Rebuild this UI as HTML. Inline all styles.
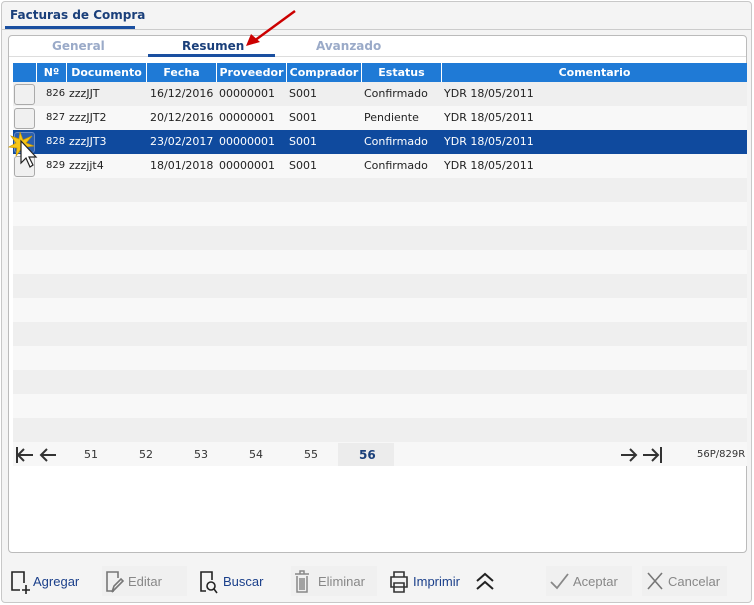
<!DOCTYPE html>
<html><head><style>
*{box-sizing:border-box;margin:0;padding:0}
body{width:754px;height:605px;background:#fff;font-family:Tahoma,"DejaVu Sans","Liberation Sans",sans-serif;position:relative;overflow:hidden}
.abs{position:absolute}
.outer{left:1px;top:1px;width:751px;height:602px;border:1px solid #c8c8c8;border-radius:4px;background:#f4f4f4}
.panel{left:8px;top:35px;width:739px;height:518px;border:1px solid #bbb;border-radius:4px;background:#fff}
.tab{top:39px;font-size:12px;font-weight:bold;color:#9aaac8}
.hdr{top:63px;height:19px;background:#1f7ad6;color:#fff;font-size:11px;font-weight:bold;text-align:center;line-height:19px;border-right:1px solid #fff}
.row{left:13px;width:734px;height:24px}
.cell{font-size:11px;line-height:24px;top:0;color:#222}
.cb{left:1px;top:2px;width:21px;height:21px;border:1px solid #aaa;border-radius:3px;background:#f0f0f0}
.pg{top:448px;font-size:11px;color:#333}
.btn{top:567px;height:29px;font-size:13px;line-height:29px;font-family:"Liberation Sans",sans-serif}
</style></head><body>
<div class="abs outer"></div>
<div class="abs" style="left:10px;top:8px;font-size:12px;font-weight:bold;color:#1a3f7a">Facturas de Compra</div>
<div class="abs" style="left:5px;top:26px;width:130px;height:3px;background:#1a4fa0"></div>
<div class="abs" style="left:2px;top:29px;width:749px;height:1px;background:#ccc"></div>
<div class="abs panel"></div>
<div class="abs" style="left:9px;top:56px;width:737px;height:1px;background:#ddd"></div>
<div class="abs tab" style="left:52px">General</div>
<div class="abs tab" style="left:182px;color:#1a3f7a">Resumen</div>
<div class="abs tab" style="left:316px">Avanzado</div>
<div class="abs" style="left:148px;top:54px;width:127px;height:3px;background:#1a4fa0"></div>
<svg class="abs" style="left:240px;top:8px" width="60" height="40"><line x1="55" y1="3" x2="14" y2="33" stroke="#c00" stroke-width="2.5"/><polygon points="6,38 11,26 20,34" fill="#c00"/></svg>
<div class="abs hdr" style="left:13px;width:24px"></div>
<div class="abs hdr" style="left:37px;width:30px">Nº</div>
<div class="abs hdr" style="left:67px;width:80px">Documento</div>
<div class="abs hdr" style="left:147px;width:70px">Fecha</div>
<div class="abs hdr" style="left:217px;width:70px">Proveedor</div>
<div class="abs hdr" style="left:287px;width:75px">Comprador</div>
<div class="abs hdr" style="left:362px;width:80px">Estatus</div>
<div class="abs hdr" style="left:442px;width:305px;border:none">Comentario</div>

<div class="abs row" style="top:82px;background:#efefef"><div class="abs cb"></div><div class="abs cell" style="left:33px;font-size:10px">826</div><div class="abs cell" style="left:56px">zzzJJT</div><div class="abs cell" style="left:137px">16/12/2016</div><div class="abs cell" style="left:206px">00000001</div><div class="abs cell" style="left:276px">S001</div><div class="abs cell" style="left:351px">Confirmado</div><div class="abs cell" style="left:431px">YDR 18/05/2011</div></div>
<div class="abs row" style="top:106px;background:#f8f8f8"><div class="abs cb"></div><div class="abs cell" style="left:33px;font-size:10px">827</div><div class="abs cell" style="left:56px">zzzJJT2</div><div class="abs cell" style="left:137px">20/12/2016</div><div class="abs cell" style="left:206px">00000001</div><div class="abs cell" style="left:276px">S001</div><div class="abs cell" style="left:351px">Pendiente</div><div class="abs cell" style="left:431px">YDR 18/05/2011</div></div>
<div class="abs row" style="top:130px;background:#0f4a9e"><div class="abs cb" style="background:#2b5fae;border-color:#6a8cc4"></div><div class="abs cell" style="left:33px;font-size:10px;color:#fff">828</div><div class="abs cell" style="left:56px;color:#fff">zzzJJT3</div><div class="abs cell" style="left:137px;color:#fff">23/02/2017</div><div class="abs cell" style="left:206px;color:#fff">00000001</div><div class="abs cell" style="left:276px;color:#fff">S001</div><div class="abs cell" style="left:351px;color:#fff">Confirmado</div><div class="abs cell" style="left:431px;color:#fff">YDR 18/05/2011</div></div>
<div class="abs row" style="top:154px;background:#f8f8f8"><div class="abs cb"></div><div class="abs cell" style="left:33px;font-size:10px">829</div><div class="abs cell" style="left:56px">zzzjjt4</div><div class="abs cell" style="left:137px">18/01/2018</div><div class="abs cell" style="left:206px">00000001</div><div class="abs cell" style="left:276px">S001</div><div class="abs cell" style="left:351px">Confirmado</div><div class="abs cell" style="left:431px">YDR 18/05/2011</div></div>
<div class="abs row" style="top:178px;height:264px;background:repeating-linear-gradient(#efefef 0 24px,#f8f8f8 24px 48px)"></div>
<svg class="abs" style="left:8px;top:130px" width="34" height="48"><polygon points="12,2 15,10 24,6 18,13 26,16 17,17 20,25 13,19 8,26 9,18 1,17 8,13 3,6 11,9" fill="#f5c518" stroke="#c90" stroke-width=".7"/><path d="M13,11 L13,33 L18,28 L22,37 L25,35 L21,27 L28,27 Z" fill="#fff" stroke="#222" stroke-width="1.2"/></svg>

<div class="abs" style="left:13px;top:442px;width:734px;height:24px;background:#f7f7f7"></div>
<div class="abs" style="left:338px;top:443px;width:56px;height:23px;background:#ececec"></div>
<svg class="abs" style="left:14px;top:446px" width="50" height="18" stroke="#333" stroke-width="2" fill="none"><path d="M3,1V17M4,9H19M10,3L4,9L10,15"/><path d="M27,9H42M33,3L27,9L33,15"/></svg>
<div class="abs pg" style="left:84px">51</div><div class="abs pg" style="left:139px">52</div><div class="abs pg" style="left:194px">53</div><div class="abs pg" style="left:249px">54</div><div class="abs pg" style="left:304px">55</div><div class="abs pg" style="left:359px;color:#1a3f7a;font-weight:bold;font-size:12px">56</div>
<svg class="abs" style="left:619px;top:446px" width="46" height="18" stroke="#333" stroke-width="2" fill="none"><path d="M2,9H17M11,3L17,9L11,15"/><path d="M24,9H39M33,3L39,9L33,15M42,1V17"/></svg>
<div class="abs pg" style="left:697px;font-size:10px;top:449px">56P/829R</div>

<svg class="abs" style="left:9px;top:570px" width="22" height="26" stroke="#222" stroke-width="1.6" fill="none"><path d="M11,20H3V2H15V13"/><path d="M17,15V24M13,20H21"/></svg>
<div class="abs btn" style="left:33px;color:#1a3f8a">Agregar</div>
<div class="abs" style="left:102px;top:566px;width:85px;height:30px;background:#f0f0f0"></div>
<svg class="abs" style="left:104px;top:570px" width="22" height="26" stroke="#777" stroke-width="1.6" fill="none"><path d="M10,21H3V2H14V8"/><path d="M8,22L10,16L17,9L19,11L12,18Z"/></svg>
<div class="abs btn" style="left:128px;color:#888">Editar</div>
<svg class="abs" style="left:198px;top:570px" width="22" height="26" stroke="#222" stroke-width="1.6" fill="none"><path d="M8,21H3V2H14V10"/><circle cx="13" cy="16" r="4"/><path d="M16,19L19,23"/></svg>
<div class="abs btn" style="left:223px;color:#1a3f8a">Buscar</div>
<div class="abs" style="left:291px;top:566px;width:86px;height:30px;background:#f0f0f0"></div>
<svg class="abs" style="left:292px;top:568px" width="22" height="28" stroke="#888" stroke-width="1.5" fill="none"><path d="M3,6H17M8,6V3H12V6M5,8V24H15V8M8,10V22M10,10V22M12,10V22"/></svg>
<div class="abs btn" style="left:318px;color:#888">Eliminar</div>
<svg class="abs" style="left:388px;top:569px" width="24" height="26" stroke="#333" stroke-width="1.6" fill="none"><path d="M6,8V3H16V8M3,8H19V18H3ZM6,14H16V23H6Z"/></svg>
<div class="abs btn" style="left:413px;color:#1a3f8a">Imprimir</div>
<svg class="abs" style="left:474px;top:571px" width="24" height="22" stroke="#222" stroke-width="2" fill="none"><path d="M3,10L11,3L19,10M3,18L11,11L19,18"/></svg>
<div class="abs" style="left:546px;top:566px;width:86px;height:30px;background:#f0f0f0"></div>
<svg class="abs" style="left:549px;top:571px" width="22" height="20" stroke="#888" stroke-width="1.8" fill="none"><path d="M2,11L8,17L19,3"/></svg>
<div class="abs btn" style="left:573px;color:#888">Aceptar</div>
<div class="abs" style="left:642px;top:566px;width:85px;height:30px;background:#f0f0f0"></div>
<svg class="abs" style="left:645px;top:571px" width="20" height="20" stroke="#777" stroke-width="1.6" fill="none"><path d="M3,2L17,18M17,2L3,18"/></svg>
<div class="abs btn" style="left:668px;color:#888">Cancelar</div>
</body></html>
